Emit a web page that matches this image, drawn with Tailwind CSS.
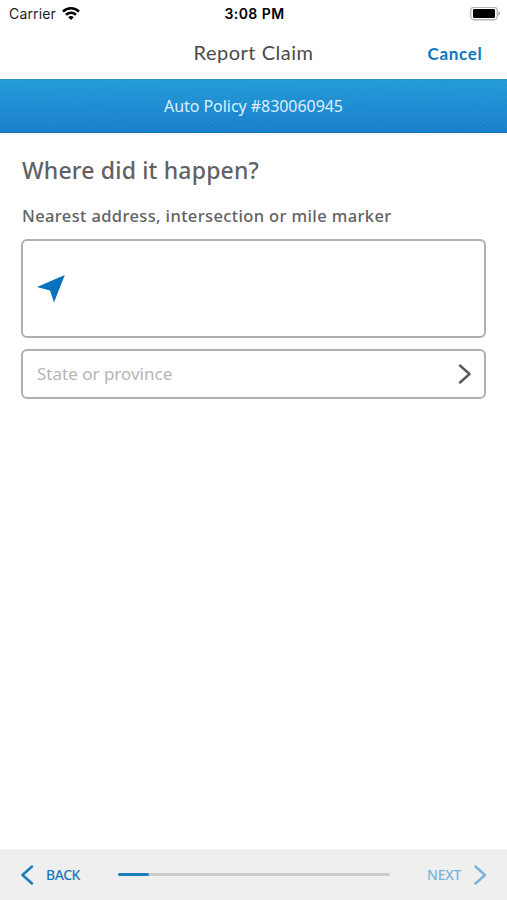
<!DOCTYPE html>
<html lang="en">
<head>
<meta charset="utf-8">
<meta name="viewport" content="width=device-width, initial-scale=1">
<title>Report Claim</title>
<script src="https://cdn.jsdelivr.net/npm/@tailwindcss/browser@4"></script>
</head>
<body class="bg-white">
<div class="flex h-[900px] w-[507px] flex-col overflow-hidden bg-white font-['Noto_Sans','Open_Sans',sans-serif] text-[#626264]">
  <div class="grid h-7 shrink-0 grid-cols-3 items-center pl-[9px] pr-[7px] font-['Inter',sans-serif] text-[14px] text-[#1c1c1e]">
    <div class="flex items-center gap-[6px]">
      <span class="leading-5 tracking-[0.15px]">Carrier</span>
      <svg class="h-[14px] w-[18px]" viewBox="0 0 18 14" fill="none" stroke="#000" stroke-width="2.5"><path d="M1 4.600a11.5 11.500 0 0 1 16 0M4 7.800a7.200 7.200 0 0 1 10 0"/><path d="M9 13.100 6.200 10.300a4 4 0 0 1 5.600 0Z" fill="#000" stroke="none"/></svg>
    </div>
    <span class="text-center font-semibold leading-5 tracking-[0.45px] text-black">3:08 PM</span>
    <svg class="h-[14px] w-[30px] justify-self-end" viewBox="0 0 30 14"><rect x=".7" y=".2" width="26.600" height="12.600" rx="3.500" fill="#fff" stroke="#b5b5b5" stroke-width="1.400"/><rect x="3" y="2" width="22" height="9" rx="1.300" fill="#000"/><path d="M28.500 4.300c2 .8 2 3.600 0 4.400Z" fill="#999"/></svg>
  </div>
  <div class="grid h-[51px] shrink-0 grid-cols-[1fr_auto_1fr] items-center px-[25px] font-['Lato',sans-serif]">
    <span></span>
    <h1 class="-mt-[3px] text-[20px] leading-6 tracking-[0.5px] text-[#4a4a4c]">Report Claim</h1>
    <button class="justify-self-end text-[17px] font-bold leading-6 tracking-[0.7px] -mr-[0.5px] text-[#0b78bd]">Cancel</button>
  </div>
  <div class="flex h-[54px] shrink-0 items-center justify-center border-y border-t-[#2f8fbe] border-b-[#1873b6] bg-[repeating-linear-gradient(145deg,#ffffff08_0px,#ffffff08_1px,transparent_1px,transparent_4px),linear-gradient(#239bd7,#197fcd)] text-[16px] tracking-[-0.05px] text-[#dcf1fc]">Auto Policy #830060945</div>
  <main class="flex grow flex-col px-[21px] pt-[21px]">
    <h2 class="pl-px text-[23px] font-medium leading-8 tracking-[0.18px]">Where did it happen?</h2>
    <label class="mt-[18px] pl-px text-[16.5px] font-medium leading-6 tracking-[0.37px]">Nearest address, intersection or mile marker</label>
    <div class="mt-[11px] flex h-[99px] items-center rounded-md border-2 border-[#b0b0b0] pl-[14px]">
      <svg class="h-[28px] w-[28px]" viewBox="0 0 28 28"><path d="M0 11.900 27.800 0 17 27.500 13 15.500Z" fill="#0872bd"/></svg>
    </div>
    <div class="mt-[11px] flex h-[50px] items-center justify-between rounded-md border-2 border-[#b0b0b0] pl-[14px] pr-[13px] text-[17px] text-[#b5b5b5]">
      <span>State or province</span>
      <svg class="h-5 w-[13px]" viewBox="0 0 13 20" fill="none" stroke="#59595b" stroke-width="2.400" stroke-linecap="round" stroke-linejoin="round"><path d="m2 1.500 9.500 8.500-9.500 8.500"/></svg>
    </div>
  </main>
  <footer class="flex h-[51px] shrink-0 items-center border-t border-[#f3f3f3] bg-[#efefef] px-[20px] pb-px text-[14px] font-medium text-[#1c78bc]">
    <button class="flex w-[98px] items-center gap-[12px]">
      <svg class="h-5 w-[14px]" viewBox="0 0 14 20" fill="none" stroke="#1c78bc" stroke-width="2.400" stroke-linecap="round" stroke-linejoin="round"><path d="m12 1.500-9.500 8.500 9.500 8.500"/></svg>
      <span class="tracking-[-0.45px]">BACK</span>
    </button>
    <div class="h-[3px] w-[272px] rounded-full bg-[#cacaca]"><div class="h-full w-[31px] rounded-full bg-[#1c7dbb]"></div></div>
    <button class="ml-auto flex items-center gap-[12px] text-[#7bb2d8]">
      <span class="tracking-[-0.3px]">NEXT</span>
      <svg class="h-5 w-[14px]" viewBox="0 0 14 20" fill="none" stroke="#7bb2d8" stroke-width="2.400" stroke-linecap="round" stroke-linejoin="round"><path d="m2.500 1.500 9.500 8.500-9.500 8.500"/></svg>
    </button>
  </footer>
</div>
</body>
</html>
